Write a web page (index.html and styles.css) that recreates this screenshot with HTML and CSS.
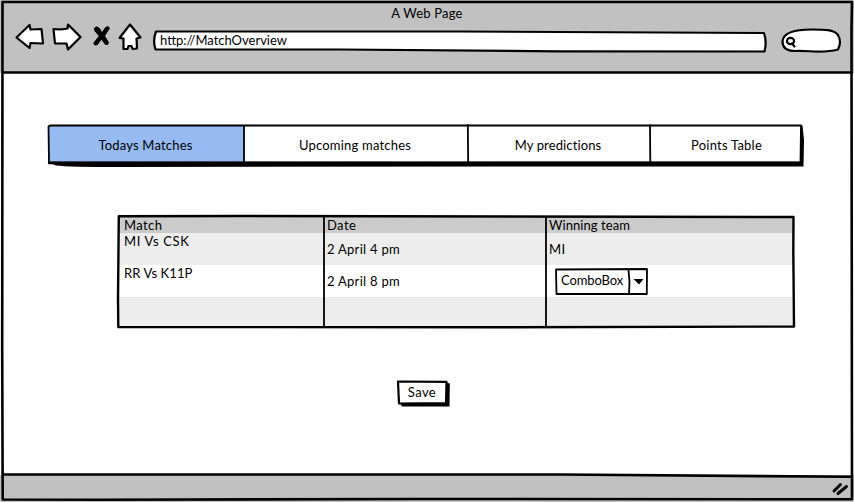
FILE: index.html
```html
<!DOCTYPE html>
<html lang="en">
<head>
<meta charset="utf-8">
<title>A Web Page</title>
<link rel="stylesheet" href="styles.css">
</head>
<body>
<div class="window">
  <header class="chrome">
    <div class="title"><span class="t-page">A Web Page</span></div>
    <div class="toolbar">
      <svg class="icon back" viewBox="14 20 34 36"><path d="M16.500 37.500 L29.500 25 L30.500 29.500 L41.500 29 L43 43.500 L30.500 43 L29.500 48 Z"/></svg>
      <svg class="icon forward" viewBox="50 20 34 36"><path d="M53.500 29 Q60 30 67.500 28.500 L68 24.500 L80.500 37 L68 49.500 L66.500 43.500 L55 43.500 Z"/></svg>
      <svg class="icon stop" viewBox="90 20 24 36"><path d="M94.500 28 Q97 25.500 99.500 28.500 L102 33 L105.500 27.500 Q108.500 25.500 109.500 28 L104.500 36 L108.500 42.500 Q108 45.500 105.500 44.500 L101.500 39 L97.500 44.500 Q94 46 93.800 43 L99.300 36 L95 31 Z"/></svg>
      <svg class="icon home" viewBox="117 20 28 36"><path d="M130 24.500 L140.500 37.500 L136.500 38.500 L137 48.500 L132.500 49 L131.500 46 L128.500 46 L127.500 49 L123.500 49 L123.500 38.500 L119.500 38 Z"/></svg>
      <div class="address">
        <svg class="outline" viewBox="151 28 618 28"><path d="M156 31.500 H460 L764 33 Q767 42 764.500 51.500 L560 51.300 L340 49.500 L155.500 49.500 Q152.500 40 156 31.500 Z"/></svg>
        <span class="t-url">http://MatchOverview</span>
      </div>
      <svg class="icon search" viewBox="779 20 65 36"><path d="M812 29.500 C797 29.500 783 32 782.500 41.500 C782.500 49 788 51 795 51 C808 50 821 54 838 49.500 Q842 42 838 35 C834 29.500 824 29.500 812 29.500 Z"/><ellipse cx="790.500" cy="41" rx="3.600" ry="3.200"/><path d="M792 43.500 L794.500 46.500"/></svg>
    </div>
  </header>
  <main class="page">
    <nav class="tabs">
      <svg class="outline" viewBox="46 122 760 47"><path class="solid" d="M48 162 L56 165.500 Q68 167 120 167 L500 166.500 L803.500 166.500 L804 140 L802.500 125.500 L800.500 125 L800 162 Z"/><path class="thin" d="M49 162.500 L48.500 126.500 Q49 125.500 52 125.500 H801 L800.500 162.500 Z"/><path class="heavy" d="M49 163 H801"/><path class="thin" d="M244 126 V163 M467.800 125 L468.200 163 M650 125.500 L650.300 163"/></svg>
      <a class="tab active"><span class="t-today">Todays Matches</span></a>
      <a class="tab"><span class="t-upcoming">Upcoming matches</span></a>
      <a class="tab"><span class="t-pred">My predictions</span></a>
      <a class="tab last"><span class="t-points">Points Table</span></a>
    </nav>
    <section class="grid">
      <div class="cell head">Match</div><div class="cell head">Date</div><div class="cell head"><span class="t-win">Winning team</span></div>
      <div class="cell odd top"><span class="t-csk">MI Vs CSK</span></div><div class="cell odd"><span class="t-date">2 April 4 pm</span></div><div class="cell odd">MI</div>
      <div class="cell top"><span class="t-rr">RR Vs K11P</span></div><div class="cell"><span class="t-date">2 April 8 pm</span></div>
      <div class="cell">
        <div class="combo">
          <svg class="outline" viewBox="553 266 97 31"><path class="thin" d="M556 269.500 L647 269 L646.800 294 L556.500 294 Z M628.500 270 L629.500 282 L629 294"/><path class="solid" d="M633.500 279 H643.500 L639 284.500 Z"/></svg>
          <span class="t-combo">ComboBox</span>
        </div>
      </div>
      <div class="cell odd"></div><div class="cell odd"></div><div class="cell odd"></div>
      <svg class="outline" viewBox="115 213 682 118"><path class="heavy" d="M118.800 216.300 L240 216 L793.500 217 L793.300 250 L794 326.500 L500 327.300 L118.300 327 L118 300 Z"/><path class="thin" d="M324 217 V326 M546 217 V326"/></svg>
    </section>
    <button class="save">
      <svg class="outline" viewBox="395 378 57 30"><path class="solid" d="M400 403 L402 406.500 L449.500 406.500 L449.800 383.500 L446 382.500 L446 403 Z"/><path class="box" d="M398 381.500 L446.500 381.800 L446 403.200 L399 403.500 Z"/></svg>
      <span class="t-save">Save</span>
    </button>
  </main>
  <footer class="status">
    <svg class="icon grip" viewBox="828 478 24 20"><path d="M834 491 L840.500 484.500 M838 493.500 L846.500 486.500"/></svg>
  </footer>
  <svg class="frame" viewBox="0 0 854 502"><path d="M2.500 2 H852 L851.500 28 L852 499.300 L420 499 L100 499.700 L2.700 499.500 L2.200 350 Z M3 72.500 H852 M3 474.500 L560 474.500 L852 476.800"/></svg>
</div>
</body>
</html>
```
FILE: styles.css
```css
* { box-sizing: border-box; }
body { margin: 0; background: #fff; color: #000; font: 13px/16px Lato, "Open Sans", sans-serif; letter-spacing: .4px; }
svg { display: block; fill: #fff; stroke: #000; stroke-width: 2.2; stroke-linejoin: round; stroke-linecap: round; }
span { white-space: nowrap; }
.window { position: relative; width: 854px; height: 502px; display: flex; flex-direction: column; overflow: hidden; }
.chrome { height: 73px; padding-top: 5px; background: #c1c1c1; }
.title { height: 15px; text-align: center; }
.t-page, .t-today, .t-upcoming { letter-spacing: .2px; }
.t-pred { letter-spacing: .12px; }
.t-points { letter-spacing: .23px; }
.t-url { letter-spacing: 0; }
.t-win { letter-spacing: .07px; }
.t-csk { letter-spacing: .62px; }
.t-rr { letter-spacing: .1px; }
.t-date { letter-spacing: .28px; }
.t-combo { letter-spacing: -.1px; }
.toolbar { display: flex; height: 36px; padding-left: 14px; }
.icon { flex: none; height: 36px; }
.back { width: 34px; margin-right: 2px; }
.forward { width: 34px; margin-right: 6px; }
.stop { width: 24px; margin-right: 3px; }
.stop path { fill: #000; stroke-width: 1; }
.home { width: 28px; margin-right: 6px; }
.address { position: relative; width: 618px; height: 28px; margin: 8px 10px 0 0; padding: 4px 9px; }
.outline { position: absolute; inset: 0; width: 100%; height: 100%; pointer-events: none; }
.outline ~ span { position: relative; }
.search { width: 65px; }
.page { flex: 1; padding-top: 49px; }
.tabs { position: relative; width: 760px; height: 47px; margin-left: 46px; padding: 3px 5px 6px 3px; display: grid; grid-template-columns: 195px 224px 182px 151px; }
.tab { display: flex; align-items: center; justify-content: center; padding: 1px 2px 0 0; }
.tab.last { padding: 1px 0 0 2px; }
.active { background: #95bbf2; }
.tabs .outline { z-index: 1; }
.outline path { fill: none; }
.address .outline path { fill: #fff; }
.outline .solid { fill: #000; stroke: none; }
.outline .thin { stroke-width: 1.800; }
.outline .heavy { stroke-width: 2.400; }
.grid { position: relative; width: 682px; height: 118px; margin: 44px 0 0 115px; padding: 3px; display: grid; grid-template: 17px 32px 32px 30px / 206px 222px 248px; }
.cell { display: flex; align-items: center; padding-left: 3px; }
.cell:nth-child(3n+1) { padding-left: 6px; }
.head { background: #cbcbcb; }
.odd { background: #ededed; }
.top { align-items: flex-start; }
.combo { position: relative; width: 97px; height: 31px; margin-left: 4px; padding: 6px 8px; }
.save { position: relative; display: block; width: 57px; height: 30px; margin: 47px 0 0 395px; padding: 0 3px 2px 0; border: 0; background: none; color: inherit; font: inherit; letter-spacing: inherit; }
.save .box { fill: #fff; }
.status { height: 27px; background: #c1c1c1; display: flex; justify-content: flex-end; padding: 3px 2px 0 0; }
.grip { width: 24px; height: 20px; position: relative; }
.grip path { stroke-width: 3; }
.frame { position: absolute; inset: 0; width: 854px; height: 502px; pointer-events: none; }
.frame path { fill: none; stroke-width: 2.600; }
```
